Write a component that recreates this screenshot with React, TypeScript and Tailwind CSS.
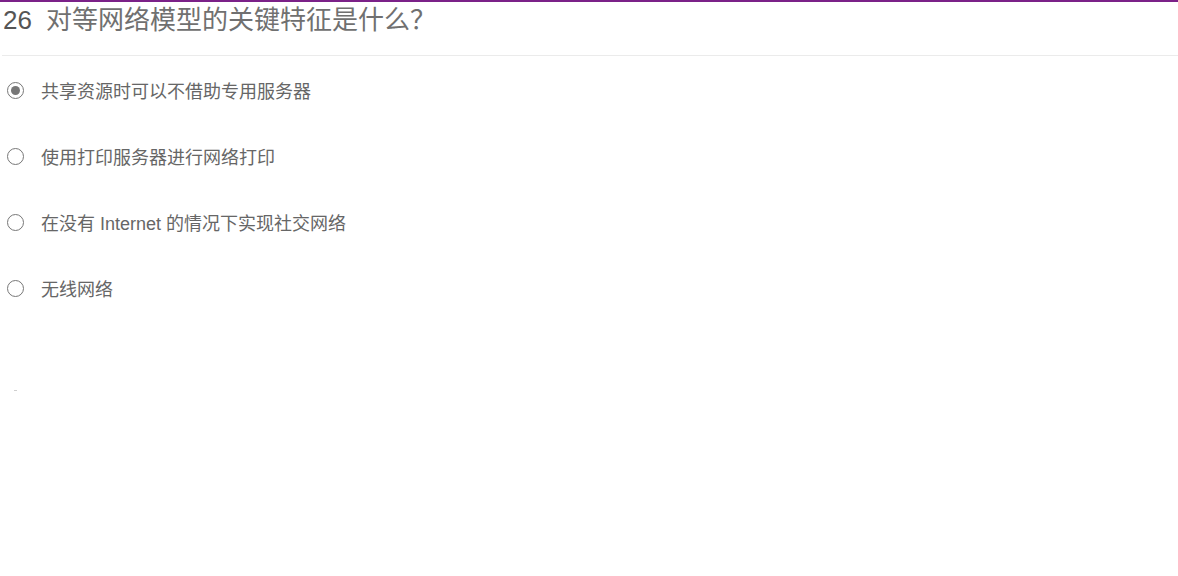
import React, { useState } from 'react';

const options = [
  '共享资源时可以不借助专用服务器',
  '使用打印服务器进行网络打印',
  '在没有 Internet 的情况下实现社交网络',
  '无线网络',
];

export default function App() {
  const [selected, setSelected] = useState(0);

  return (
    <div className="min-h-screen bg-white border-t-2 border-[#7b2188] font-['Liberation_Sans','Noto_Sans_CJK_SC',sans-serif]">
      {/* Question title */}
      <div className="ml-[2px] pb-[17px] border-b border-[#ebebeb]">
        <h1 className="flex items-baseline text-[26px] leading-[36px] font-normal pl-[1px]">
          <span className="text-[#555]">26</span>
          <span className="ml-[14px] text-[#707070]">对等网络模型的关键特征是什么？</span>
        </h1>
      </div>

      {/* Answers */}
      <div className="pt-[3px]">
        {options.map((opt, i) => (
          <label
            key={i}
            onClick={() => setSelected(i)}
            className="flex items-center h-[66px] cursor-pointer"
          >
            <span className="ml-[7px] mb-[4px] w-[17px] h-[17px] rounded-full border-[1.5px] border-[#777] flex items-center justify-center shrink-0">
              {selected === i && <span className="w-[9px] h-[9px] rounded-full bg-[#777]" />}
            </span>
            <span className="ml-[17px] text-[18px] text-[#666]">{opt}</span>
          </label>
        ))}
      </div>

      <div className="mt-[67px] ml-[14px] w-[3px] h-[1px] bg-[#cfcfcf]" />
    </div>
  );
}
